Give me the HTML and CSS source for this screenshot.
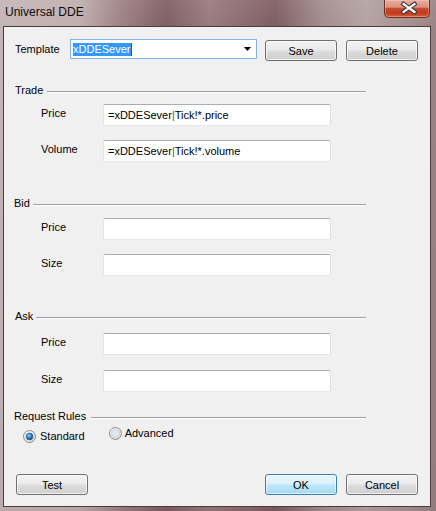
FILE: index.html
```html
<!DOCTYPE html>
<html>
<head>
<meta charset="utf-8">
<link rel="stylesheet" href="styles.css">
</head>
<body>
<div class="window">
  <div class="titlebar">
    <span class="title">Universal DDE</span>
    <div class="close">
      <svg width="46" height="18" viewBox="0 0 46 18">
        <path d="M19.5 4 L30.5 12 M30.5 4 L19.5 12" stroke="#2e3440" stroke-width="4.2" stroke-linecap="square" fill="none"/>
        <path d="M19.5 4 L30.5 12 M30.5 4 L19.5 12" stroke="#ffffff" stroke-width="2.2" stroke-linecap="square" fill="none"/>
      </svg>
    </div>
  </div>
  <div class="client">
    <div class="row-template">
      <span class="lbl-template">Template</span>
      <div class="combo">
        <span class="sel">xDDESever</span><span class="caret"></span>
        <svg class="arrow" width="7" height="4" viewBox="0 0 7 4"><path d="M0 0 H7 L3.5 4 Z" fill="#000"/></svg>
      </div>
      <button class="btn btn-save">Save</button>
      <button class="btn btn-delete">Delete</button>
    </div>

    <div class="group-head head-trade"><span class="glabel">Trade</span><span class="gline"></span></div>
    <div class="field first-trade"><span class="flabel">Price</span><div class="input">=xDDESever<span class="pipe">|</span>Tick!*.price</div></div>
    <div class="field next"><span class="flabel">Volume</span><div class="input">=xDDESever<span class="pipe">|</span>Tick!*.volume</div></div>

    <div class="group-head head-bid"><span class="glabel">Bid</span><span class="gline"></span></div>
    <div class="field first-bid"><span class="flabel">Price</span><div class="input"></div></div>
    <div class="field next"><span class="flabel">Size</span><div class="input"></div></div>

    <div class="group-head head-ask"><span class="glabel">Ask</span><span class="gline"></span></div>
    <div class="field first-ask"><span class="flabel">Price</span><div class="input"></div></div>
    <div class="field next-ask"><span class="flabel">Size</span><div class="input"></div></div>

    <div class="group-head head-rules"><span class="glabel">Request Rules</span><span class="gline"></span></div>
    <div class="radios">
      <label class="radio radio-std">
        <svg width="13" height="13" viewBox="0 0 13 13">
          <defs>
            <radialGradient id="rbg" cx="0.35" cy="0.3" r="0.8">
              <stop offset="0" stop-color="#ffffff"/>
              <stop offset="1" stop-color="#d4d6d8"/>
            </radialGradient>
            <radialGradient id="dot" cx="0.4" cy="0.35" r="0.7">
              <stop offset="0" stop-color="#7ad0ff"/>
              <stop offset="0.6" stop-color="#1f7cc4"/>
              <stop offset="1" stop-color="#0c4a80"/>
            </radialGradient>
          </defs>
          <circle cx="6.5" cy="6.5" r="6" fill="url(#rbg)" stroke="#8a8c8e" stroke-width="1"/>
          <circle cx="6.5" cy="6.5" r="3.4" fill="url(#dot)" stroke="#1b4f7a" stroke-width="0.6"/>
        </svg>
        <span class="rtext">Standard</span>
      </label>
      <label class="radio radio-adv">
        <svg width="13" height="13" viewBox="0 0 13 13">
          <circle cx="6.5" cy="6.5" r="6" fill="url(#rbg)" stroke="#8a8c8e" stroke-width="1"/>
          <circle cx="6.5" cy="6.5" r="4" fill="#e4e5e6" stroke="#c6c8ca" stroke-width="0.6"/>
        </svg>
        <span class="rtext">Advanced</span>
      </label>
    </div>

    <div class="bottom">
      <button class="btn btn-test">Test</button>
      <button class="btn btn-ok">OK</button>
      <button class="btn btn-cancel">Cancel</button>
    </div>
  </div>
</div>
</body>
</html>
```

FILE: styles.css
```css
html, body {
  margin: 0;
  padding: 0;
  background: #8a6c6c;
}
.window {
  width: 436px;
  height: 511px;
  box-sizing: border-box;
  padding: 0 5px 4px 3px;
  display: flex;
  flex-direction: column;
  font-family: "Liberation Sans", Arial, sans-serif;
  font-size: 11px;
  color: #000;
  background:
    linear-gradient(180deg, rgba(255,255,255,0.08) 0%, rgba(0,0,0,0) 30px, rgba(0,0,0,0.05) 100%),
    linear-gradient(90deg, #c4b5b6 0%, #c0aeae 18%, #9c7f82 28%, #7f5e63 38%, #98797c 48%, #8b6a6e 56%, #7d5c60 63%, #a38c8d 74%, #b4a2a2 84%, #a89292 92%, #9a8282 100%);
}
.titlebar {
  height: 26px;
  display: flex;
  align-items: flex-start;
  flex-shrink: 0;
}
.title {
  padding-left: 2px;
  padding-top: 5px;
  font-size: 12px;
  line-height: 15px;
  color: #0c0c0c;
}
.close {
  margin-left: auto;
  margin-right: 1px;
  width: 46px;
  height: 18px;
  box-sizing: border-box;
  border: 1px solid #6e2e26;
  border-top: none;
  border-radius: 0 0 5px 5px;
  background: linear-gradient(180deg, #e9ad9f 0%, #dc907e 42%, #c84b30 50%, #c03a1f 78%, #dc6236 100%);
  box-shadow: inset 0 0 0 1px rgba(255, 220, 210, 0.35);
  overflow: hidden;
}
.close svg {
  display: block;
  margin-left: -1px;
}
.client {
  flex: 1;
  border: 1px solid #4e3c3c;
  background: #f0f0f0;
  display: flex;
  flex-direction: column;
}

/* template row */
.row-template {
  margin-top: 12px;
  height: 22px;
  display: flex;
  align-items: flex-start;
}
.lbl-template {
  margin-left: 11px;
  width: 55px;
  line-height: 21px;
}
.combo {
  width: 187px;
  height: 20px;
  box-sizing: border-box;
  border: 1px solid #7eb4ea;
  background: #fff;
  display: flex;
  align-items: center;
  padding-left: 2px;
}
.sel {
  background: #3399ff;
  color: #fff;
  line-height: 13px;
  padding: 0 1px 0 0;
}
.caret {
  width: 1px;
  height: 13px;
  background: #7a4a1a;
}
.arrow {
  margin-left: auto;
  margin-right: 5px;
}
.btn {
  font-family: "Liberation Sans", Arial, sans-serif;
  font-size: 11px;
  color: #000;
  width: 72px;
  height: 21px;
  box-sizing: border-box;
  border: 1px solid #707070;
  border-radius: 3px;
  background: linear-gradient(180deg, #f2f2f2 0%, #ebebeb 48%, #dddddd 52%, #cfcfcf 100%);
  box-shadow: inset 0 0 0 1px rgba(255, 255, 255, 0.7);
  padding: 0;
  margin: 0;
}
.btn-save {
  margin-left: 8px;
  margin-top: 1px;
}
.btn-delete {
  margin-left: 9px;
  margin-top: 1px;
}

/* group headers */
.group-head {
  display: flex;
  align-items: flex-start;
  height: 14px;
  gap: 4px;
  box-sizing: border-box;
}
.glabel {
  line-height: 14px;
}
.gline {
  flex: 1;
  margin-top: 8px;
  border-top: 1px solid #a0a0a0;
  border-bottom: 1px solid #ffffff;
}
.head-trade {
  margin-top: 22px;
  margin-left: 11px;
  width: 351px;
}
.head-bid {
  margin-top: 34px;
  margin-left: 10px;
  width: 352px;
  gap: 3px;
}
.head-ask {
  margin-top: 33px;
  margin-left: 11px;
  width: 351px;
  gap: 3px;
}
.head-rules {
  margin-top: 17px;
  margin-left: 10px;
  width: 352px;
  gap: 5px;
}

/* fields */
.field {
  display: flex;
  height: 22px;
}
.first-trade { margin-top: 7px; }
.first-bid { margin-top: 8px; }
.first-ask { margin-top: 10px; }
.next { margin-top: 14px; }
.next-ask { margin-top: 15px; }
.flabel {
  margin-left: 37px;
  width: 62px;
  line-height: 18px;
}
.input {
  width: 228px;
  height: 22px;
  box-sizing: border-box;
  border: 1px solid;
  border-color: #abadb3 #dbdfe6 #e3e9ef #e2e3ea;
  border-radius: 2px;
  background: #fff;
  padding-left: 4px;
  line-height: 20px;
  white-space: nowrap;
}
.pipe {
  color: #6a4a2a;
}

/* radios */
.radios {
  margin-top: 4px;
  margin-left: 19px;
  height: 16px;
  display: flex;
  align-items: flex-start;
}
.radio {
  display: flex;
  align-items: center;
  gap: 4px;
}
.radio svg {
  display: block;
}
.rtext {
  line-height: 13px;
}
.radio-std {
  margin-top: 3px;
}
.radio-adv {
  margin-left: 24px;
  margin-top: 0;
  gap: 3px;
}

/* bottom buttons */
.bottom {
  margin-top: 31px;
  display: flex;
}
.btn-test {
  margin-left: 12px;
}
.btn-ok {
  margin-left: 177px;
  border-color: #3c7fb1;
  background: linear-gradient(180deg, #eaf6fd 0%, #d9f0fc 48%, #bee6fd 52%, #a7d9f5 100%);
  box-shadow: inset 0 0 0 1px rgba(255, 255, 255, 0.6);
}
.btn-cancel {
  margin-left: 9px;
}
```
